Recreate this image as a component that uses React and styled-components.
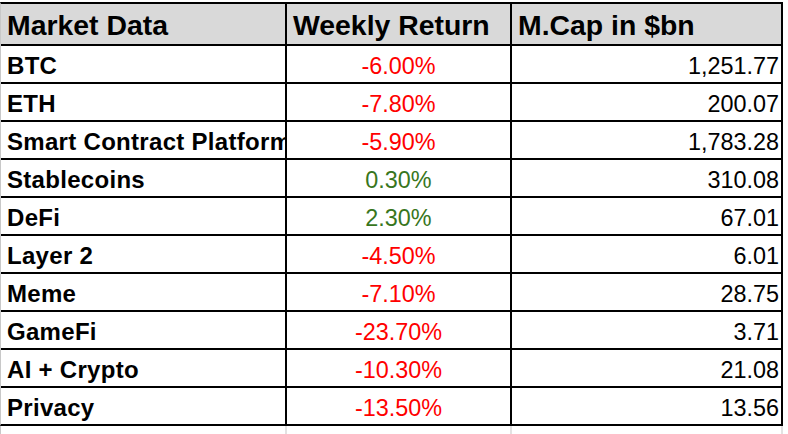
import React from "react";
import styled, { createGlobalStyle } from "styled-components";

const Global = createGlobalStyle`
  html, body { margin: 0; padding: 0; background: #fff; }
  body { font-family: "Liberation Sans", Arial, sans-serif; }
`;

const Page = styled.div`
  padding-top: 2px;
  width: 788px;
  height: 434px;
  overflow: hidden;
  box-sizing: border-box;
`;

const Sheet = styled.div`
  display: grid;
  grid-template-columns: 284px 223px 269px;
  grid-template-rows: 40px repeat(10, 36px);
  gap: 2px;
  background: #000;
  border-top: 2px solid #000;
  border-bottom: 2px solid #000;
  border-right: 2px solid #000;
  border-left: 1px solid #c8c8c8;
  width: max-content;
`;

const Ghost = styled.div`
  display: grid;
  grid-template-columns: 284px 223px 269px;
  grid-template-rows: 10px;
  gap: 2px;
  background: #e2e2e2;
  border-right: 2px solid #e2e2e2;
  border-left: 1px solid #c8c8c8;
  width: max-content;
`;

const GhostCell = styled.div`
  background: #fff;
`;

const Head = styled.div`
  background: #d9d9d9;
  display: flex;
  align-items: center;
  padding: 3px 0 0 6px;
  font-size: 28.4px;
  font-weight: 700;
  color: #000;
  white-space: nowrap;
  overflow: hidden;
`;

const Cell = styled.div`
  background: #fff;
  display: flex;
  align-items: center;
  justify-content: ${(p) =>
    p.$align === "center" ? "center" : p.$align === "right" ? "flex-end" : "flex-start"};
  padding: ${(p) => (p.$align === "right" ? "4px 2px 0 0" : p.$align === "center" ? "4px 0 0 0" : "4px 0 0 6px")};
  font-size: ${(p) => (p.$bold ? "24px" : "23.4px")};
  font-weight: ${(p) => (p.$bold ? 700 : 400)};
  letter-spacing: ${(p) => (p.$bold ? "0.3px" : "0")};
  color: ${(p) => p.$color || "#000"};
  white-space: nowrap;
  overflow: hidden;
`;

const rows = [
  ["BTC", "-6.00%", "1,251.77"],
  ["ETH", "-7.80%", "200.07"],
  ["Smart Contract Platform", "-5.90%", "1,783.28"],
  ["Stablecoins", "0.30%", "310.08"],
  ["DeFi", "2.30%", "67.01"],
  ["Layer 2", "-4.50%", "6.01"],
  ["Meme", "-7.10%", "28.75"],
  ["GameFi", "-23.70%", "3.71"],
  ["AI + Crypto", "-10.30%", "21.08"],
  ["Privacy", "-13.50%", "13.56"],
];

export default function App() {
  return (
    <Page>
      <Global />
      <Sheet>
        <Head>Market Data</Head>
        <Head>Weekly Return</Head>
        <Head>M.Cap in $bn</Head>
        {rows.map(([name, ret, cap]) => (
          <React.Fragment key={name}>
            <Cell $bold>{name}</Cell>
            <Cell $align="center" $color={ret.startsWith("-") ? "#ff0000" : "#38761d"}>
              {ret}
            </Cell>
            <Cell $align="right">{cap}</Cell>
          </React.Fragment>
        ))}
      </Sheet>
      <Ghost>
        <GhostCell />
        <GhostCell />
        <GhostCell />
      </Ghost>
    </Page>
  );
}
